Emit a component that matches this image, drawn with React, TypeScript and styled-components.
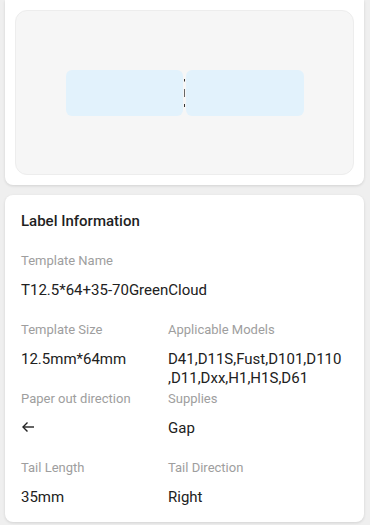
import * as React from 'react'
import styled, { createGlobalStyle } from 'styled-components'

//=================================/
const GlobalStyle = createGlobalStyle`
    html, body {
        margin: 0;
        padding: 0;
        background: #efefef;
        font-family: Roboto, "Noto Sans", sans-serif;
    }
`;

const Page = styled.div`
    width: 370px;
    height: 525px;
    box-sizing: border-box;
    padding: 0 6px 0 5px;
    display: flex;
    flex-direction: column;
    gap: 10px;
    overflow: hidden;
`;

const Card = styled.div`
    background: #ffffff;
    border-radius: 8px;
    box-shadow: 0 1px 3px rgba(0, 0, 0, 0.12);
`;

const PreviewCard = styled(Card)`
    border-radius: 0 0 8px 8px;
    padding: 10px;
`;

const PreviewBox = styled.div`
    height: 165px;
    box-sizing: border-box;
    background: #f6f6f6;
    border: 1px solid #ededed;
    border-radius: 12px;
    display: flex;
    align-items: center;
    justify-content: center;
`;

const LabelStrip = styled.div`
    display: flex;
    align-items: stretch;
    height: 46px;
`;

const LabelPiece = styled.div<{ $w: number }>`
    width: ${p => p.$w}px;
    background: #e2f2fc;
    border-radius: 6px;
`;

const InfoCard = styled(Card)`
    padding: 16px 16px 14px;
`;

const Title = styled.div`
    font-size: 15px;
    font-weight: 500;
    line-height: 20px;
    color: #1f1f1f;
    margin-bottom: 20px;
`;

const Grid = styled.div`
    display: grid;
    grid-template-columns: 147px 180px;
    row-gap: 19px;
`;

const Field = styled.div<{ $span?: boolean }>`
    grid-column: ${p => (p.$span ? '1 / span 2' : 'auto')};
    display: flex;
    flex-direction: column;
`;

const FieldLabel = styled.div`
    font-size: 13px;
    line-height: 20px;
    color: #9e9e9e;
    margin-bottom: 10px;
`;

const FieldValue = styled.div`
    font-size: 15px;
    line-height: 19px;
    height: 20px;
    color: #212121;
    white-space: normal;
`;
//=================================/

const Divider = () => (
    <svg width="3" height="46" viewBox="0 0 3 46">
        <rect x="1" y="9" width="1" height="2.5" fill="#333" />
        <rect x="1" y="19" width="1" height="8" fill="#666" />
        <rect x="1" y="34" width="1" height="3" fill="#333" />
    </svg>
);

const ArrowLeftIcon = () => (
    <svg width="14" height="12" viewBox="0 0 14 12" fill="none" stroke="#212121" strokeWidth="1.4">
        <path d="M13 6H2" />
        <path d="M6.5 1.5L2 6l4.5 4.5" />
    </svg>
);

//=====================================================================================//
export default function App() {
    return (
        <>
            <GlobalStyle />
            <Page>
                <PreviewCard>
                    <PreviewBox>
                        <LabelStrip>
                            <LabelPiece $w={117} />
                            <Divider />
                            <LabelPiece $w={118} />
                        </LabelStrip>
                    </PreviewBox>
                </PreviewCard>

                <InfoCard>
                    <Title>Label Information</Title>
                    <Grid>
                        <Field $span>
                            <FieldLabel>Template Name</FieldLabel>
                            <FieldValue>T12.5*64+35-70GreenCloud</FieldValue>
                        </Field>
                        <Field>
                            <FieldLabel>Template Size</FieldLabel>
                            <FieldValue>12.5mm*64mm</FieldValue>
                        </Field>
                        <Field>
                            <FieldLabel>Applicable Models</FieldLabel>
                            <FieldValue>D41,D11S,Fust,D101,D110<wbr />,D11,Dxx,H1,H1S,D61</FieldValue>
                        </Field>
                        <Field>
                            <FieldLabel>Paper out direction</FieldLabel>
                            <FieldValue><ArrowLeftIcon /></FieldValue>
                        </Field>
                        <Field>
                            <FieldLabel>Supplies</FieldLabel>
                            <FieldValue>Gap</FieldValue>
                        </Field>
                        <Field>
                            <FieldLabel>Tail Length</FieldLabel>
                            <FieldValue>35mm</FieldValue>
                        </Field>
                        <Field>
                            <FieldLabel>Tail Direction</FieldLabel>
                            <FieldValue>Right</FieldValue>
                        </Field>
                    </Grid>
                </InfoCard>
            </Page>
        </>
    );
}
//=====================================================================================//
